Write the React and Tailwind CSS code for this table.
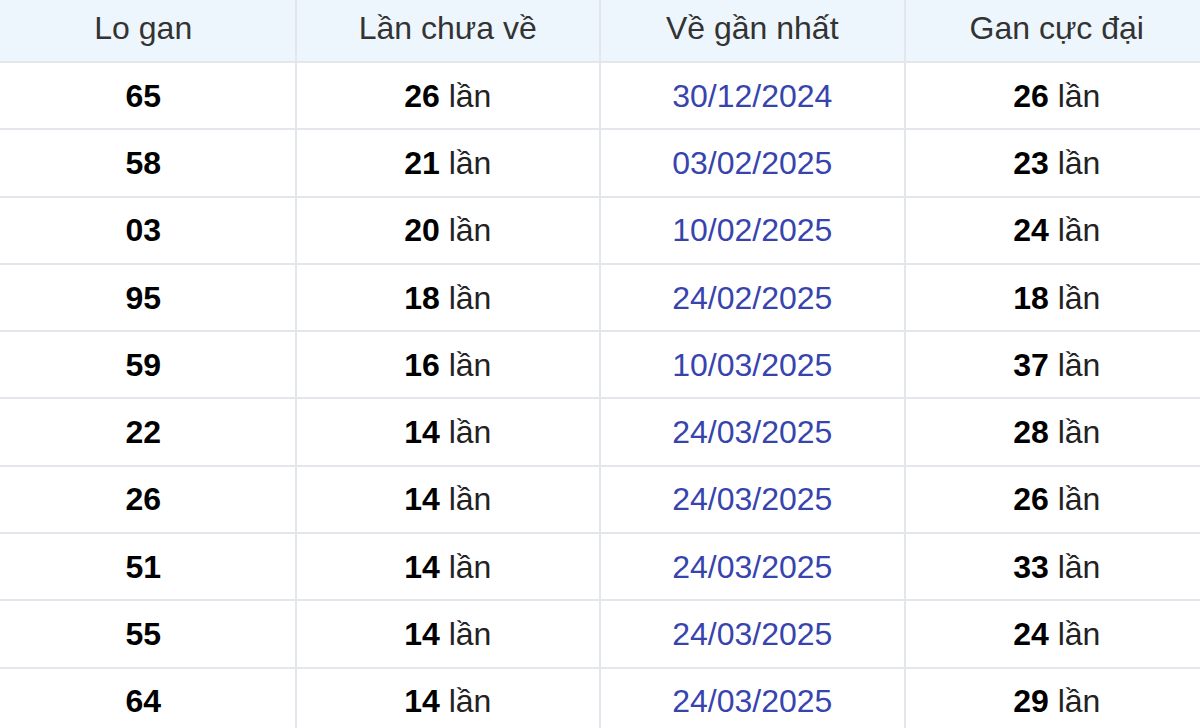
export default function App() {
  const rows = [
    ['65', 26, '30/12/2024', 26],
    ['58', 21, '03/02/2025', 23],
    ['03', 20, '10/02/2025', 24],
    ['95', 18, '24/02/2025', 18],
    ['59', 16, '10/03/2025', 37],
    ['22', 14, '24/03/2025', 28],
    ['26', 14, '24/03/2025', 26],
    ['51', 14, '24/03/2025', 33],
    ['55', 14, '24/03/2025', 24],
    ['64', 14, '24/03/2025', 29],
  ]

  return (
    <div className="w-[1200px] h-[728px] overflow-hidden bg-white" style={{ fontFamily: '"Liberation Sans", Arial, sans-serif' }}>
      <table className="ml-[-10px] w-[1220px] border-collapse table-fixed text-[32px] text-[#222]">
        <thead>
          <tr className="h-[62px] bg-[#eef6fd] text-[#333]">
            {['Lo gan', 'Lần chưa về', 'Về gần nhất', 'Gan cực đại'].map((h) => (
              <th key={h} className="font-normal border-2 border-t-0 border-[#e3e6ea] text-center pb-[5px]">
                {h}
              </th>
            ))}
          </tr>
        </thead>
        <tbody>
          {rows.map(([lo, n, date, max]) => (
            <tr key={lo} className="h-[67.3px]">
              <td className="border-2 border-[#e3e6ea] text-center font-bold text-black">{lo}</td>
              <td className="border-2 border-[#e3e6ea] text-center">
                <b className="text-black">{n}</b> lần
              </td>
              <td className="border-2 border-[#e3e6ea] text-center text-[#3744ae]">{date}</td>
              <td className="border-2 border-[#e3e6ea] text-center">
                <b className="text-black">{max}</b> lần
              </td>
            </tr>
          ))}
        </tbody>
      </table>
    </div>
  )
}
